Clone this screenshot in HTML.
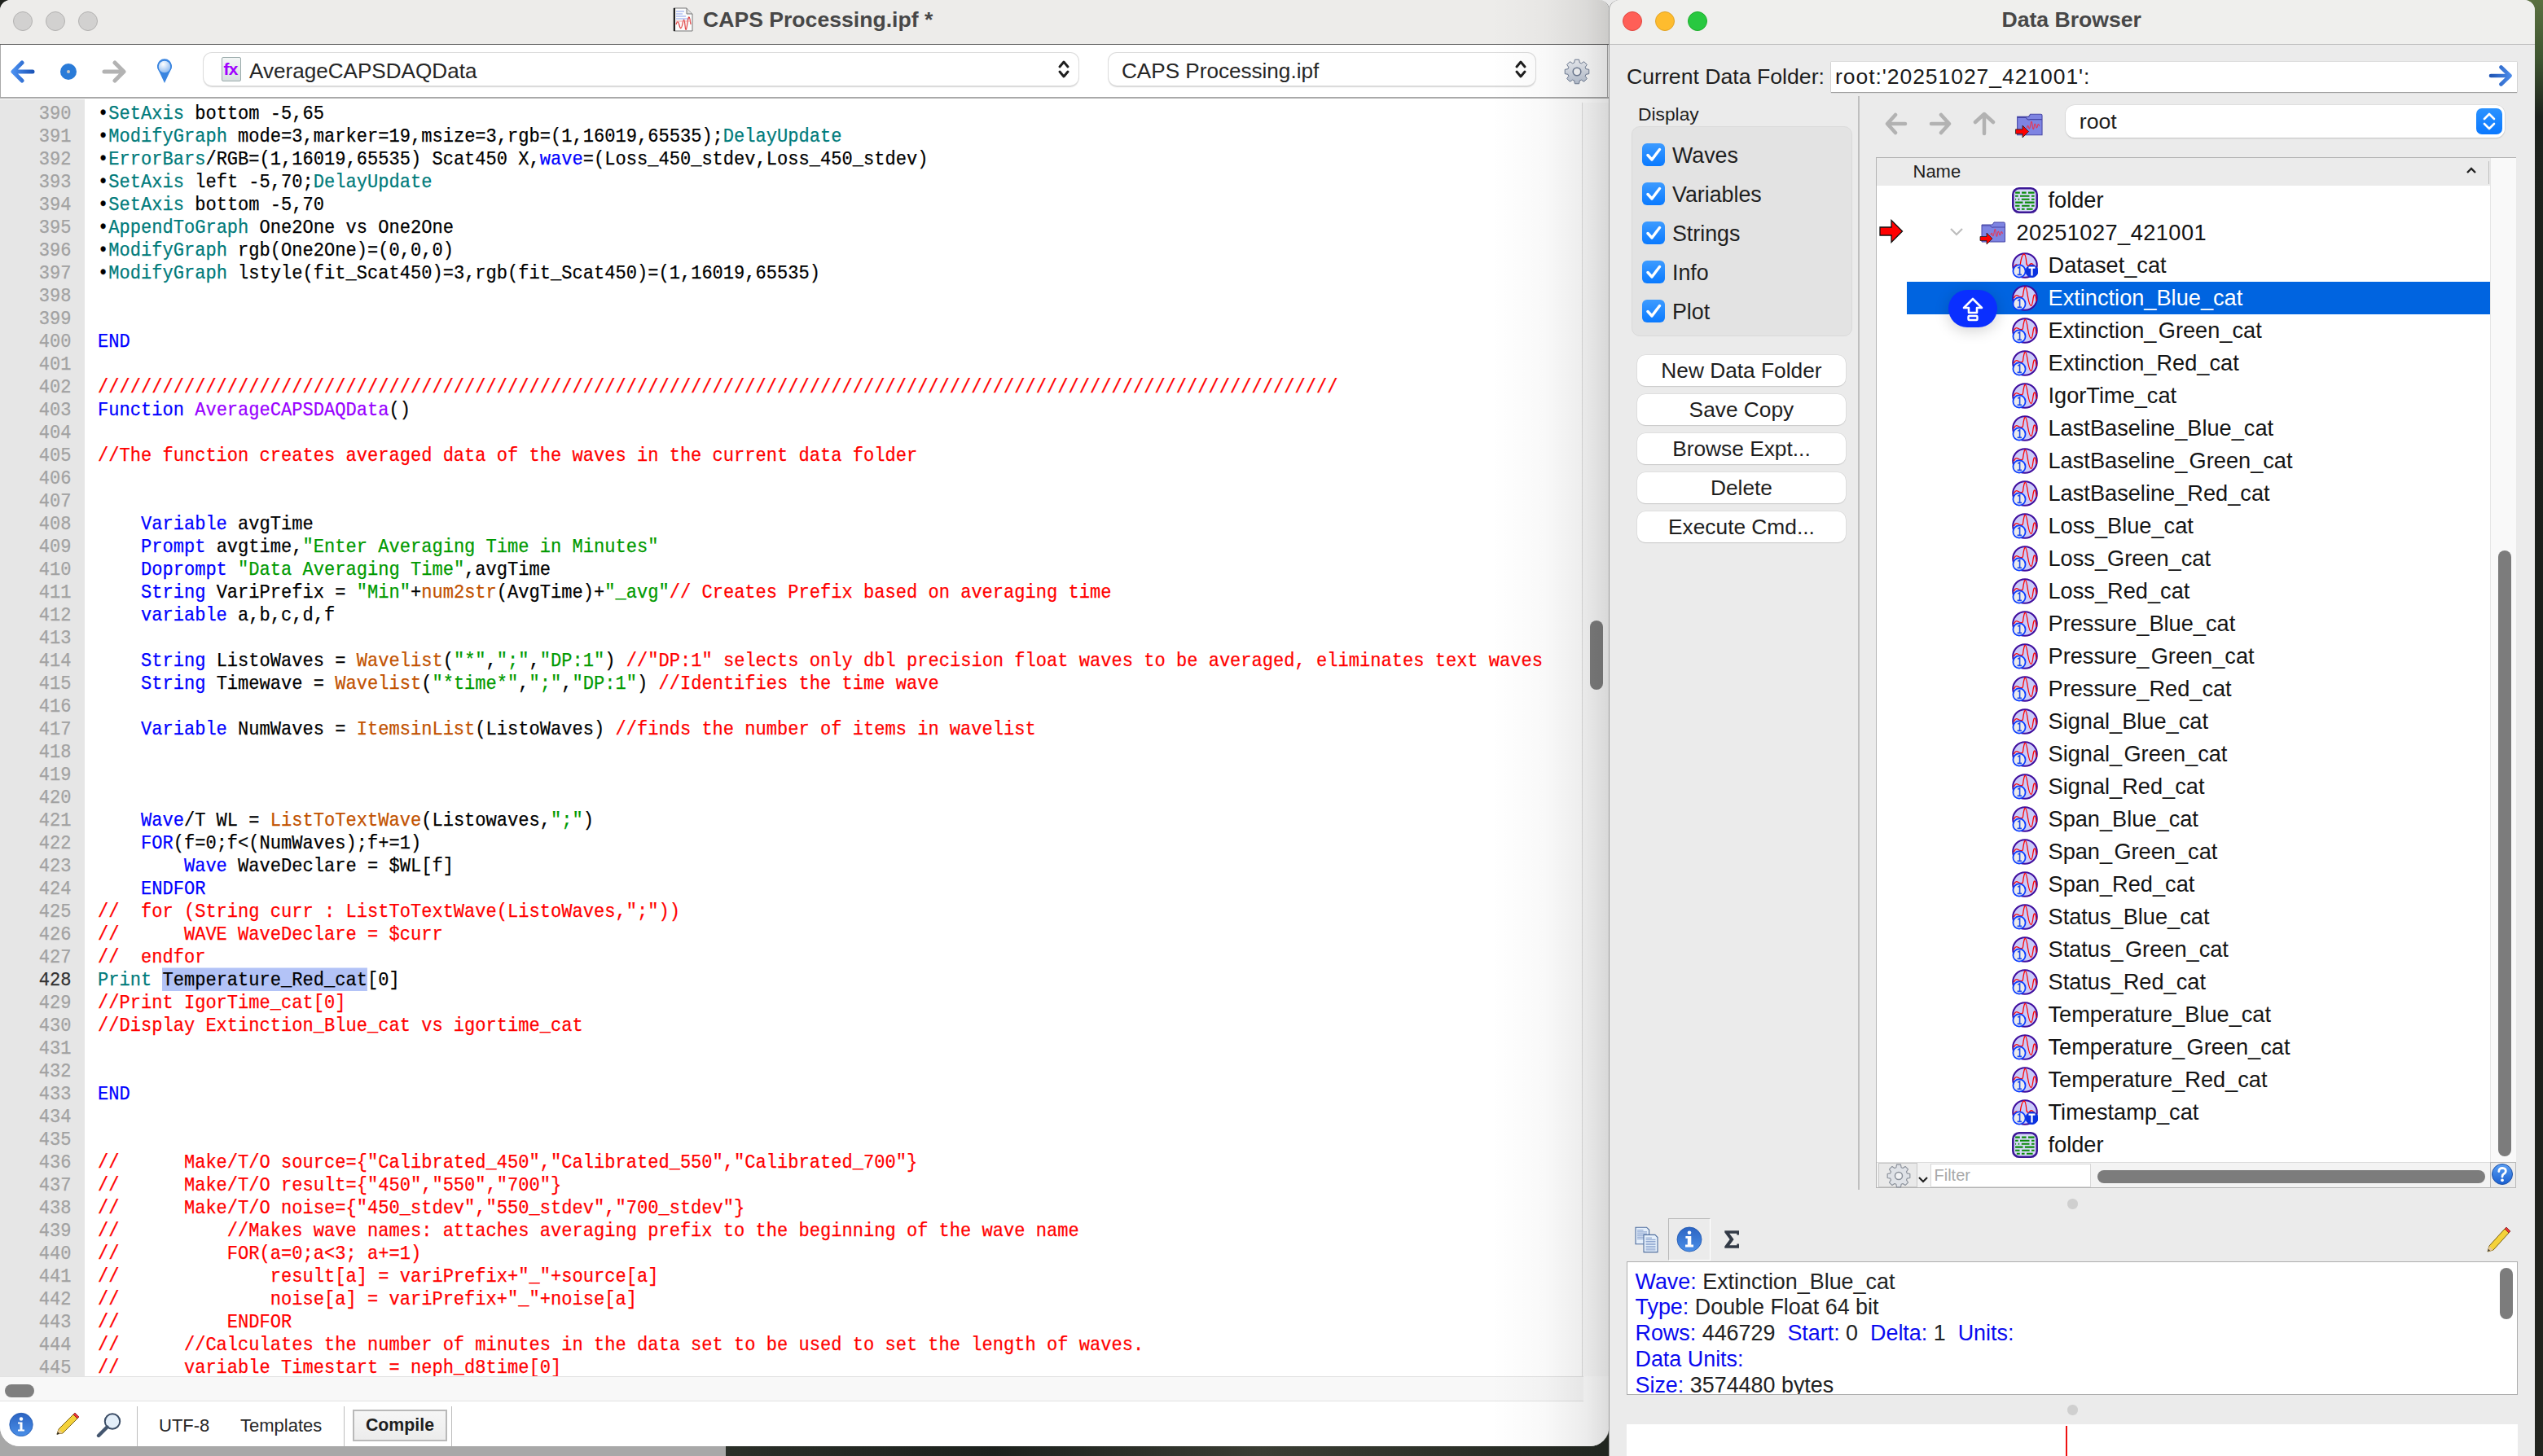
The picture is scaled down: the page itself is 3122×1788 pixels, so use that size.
<!DOCTYPE html>
<html><head><meta charset="utf-8"><title>Igor</title><style>
*{margin:0;padding:0;box-sizing:border-box}
html,body{width:3122px;height:1788px;overflow:hidden}
body{position:relative;background:#1e211d;font-family:"Liberation Sans",sans-serif}
#desk0{position:absolute;left:1950px;top:0;width:50px;height:30px;background:#e9e9e9}
#desk1{position:absolute;left:0;top:1700px;width:891px;height:88px;background:#a8a8a8}
#desk2{position:absolute;left:891px;top:1740px;width:1100px;height:48px;background:linear-gradient(90deg,#2a2f28,#1c211d 30%,#3a3d33 60%,#20251f)}
#desk3{position:absolute;left:3100px;top:0;width:22px;height:1788px;background:linear-gradient(180deg,#5a7040,#3e5530 4%,#1d221d 8%,#1a1d1a 60%,#23251f)}
.ic{position:absolute}
#lw{position:absolute;left:0;top:0;width:1976px;height:1776px;background:#fff;border-radius:13px 13px 24px 24px;overflow:hidden;border-right:1.5px solid #8c8c8c}
#lw-title{position:absolute;left:0;top:0;width:100%;height:55px;background:#edecea;border-bottom:1.5px solid #5e5e5e}
.tl{position:absolute;top:14px;width:24px;height:24px;border-radius:50%;background:#d2d1d0;border:1px solid #b3b2b1}
#ipf-icon{position:absolute;left:826px;top:9px;width:25px;height:30px}
#ipf-icon svg{display:block}
#lw-ttext{position:absolute;left:863px;top:6px;font-weight:bold;font-size:26.6px;color:#474747;line-height:36px;white-space:nowrap}
#lw-tb{position:absolute;left:0;top:0;width:100%;height:121px}
.popup{position:absolute;background:#fff;border-radius:10px;box-shadow:0 0 0 1px #dcdcdc,0 1.5px 1.5px rgba(0,0,0,.18)}
.ptext{position:absolute;top:2px;line-height:41px;font-size:26.1px;color:#262626;white-space:nowrap}
.updown{position:absolute;top:8px}
#fx-icon{position:absolute;left:22px;top:5px;width:24px;height:30px;background:linear-gradient(180deg,#f3f6f6,#d8e0e0);border:1px solid #9aa;border-radius:2px}
#fx-icon span{position:absolute;left:1.5px;top:4px;font-size:21px;font-weight:bold;color:#a000ff;line-height:20px;letter-spacing:-0.8px}
#lw-tb:after{content:"";position:absolute;left:0;top:119px;width:100%;height:1.5px;background:#a9a9a9}
#gutter{position:absolute;left:0;top:122px;width:104px;height:1568px;background:#e6e6e6}
#code{position:absolute;left:0;top:0;width:1942px;height:1690px;font-family:"Liberation Mono",monospace;font-size:24px;-webkit-text-stroke:0.25px currentColor}
.ln{position:absolute;left:0;width:87.5px;text-align:right;color:#a2a2a2;line-height:28px;height:28px;white-space:pre;transform:scaleX(0.9192);transform-origin:87.5px 0}
.ln.cur{color:#333}
.cl{position:absolute;left:120px;line-height:28px;height:28px;white-space:pre;color:#000;transform:scaleX(0.9192);transform-origin:0 0}
.teal{color:#007b7b}.blue{color:#0000ff}.purp{color:#9900ff}.orng{color:#c25200}.grn{color:#009a00}.red{color:#ff0000}
.hl{background:#b3c3f7;box-shadow:0 -1.5px 0 #b3c3f7}
#vscroll{position:absolute;left:1942px;top:126px;width:34px;height:1564px;background:#fbfbfb;border-left:1px solid #dedede}
#vthumb{position:absolute;left:9px;top:636px;width:16px;height:85px;border-radius:8px;background:#7f7f7f}
#hscroll{position:absolute;left:0;top:1690px;width:1944px;height:31px;background:#f8f8f8;border-top:1px solid #e2e2e2;border-bottom:1px solid #e2e2e2}
#hthumb{position:absolute;left:6px;top:9px;width:36px;height:16px;border-radius:8px;background:#7f7f7f}
#status{position:absolute;left:0;top:1721px;width:100%;height:55px;background:#fff}
#status .ic{top:13px!important}
.sep{position:absolute;top:6px;width:1px;height:49px;background:#bdbdbd}
.stxt{position:absolute;top:2px;line-height:55px;font-size:22px;color:#262626}
#compile{position:absolute;left:433px;top:10px;width:116px;height:39px;border:2px solid #b9b9b9;background:linear-gradient(#f6f6f6,#ececec);font-weight:bold;font-size:21.3px;line-height:35px;text-align:center;color:#1e1e1e}
#lw-shadow{position:absolute;left:1830px;top:0;width:146px;height:1776px;background:linear-gradient(90deg,rgba(0,0,0,0),rgba(0,0,0,.025) 45%,rgba(0,0,0,.075) 80%,rgba(0,0,0,.14));pointer-events:none}

#rw{position:absolute;left:1976px;top:0;width:1136px;height:1800px;background:#ebebeb;border-radius:13px 13px 0 0;overflow:hidden;box-shadow:-1px 0 0 #9c9c9c}
#rw-title{position:absolute;left:0;top:0;width:100%;height:55px;background:#efefed;border-bottom:1px solid #bdbdbd}
.tlc{position:absolute;top:14px;width:24px;height:24px;border-radius:50%;border:1px solid}
#rw-ttext{position:absolute;left:481.5px;top:6px;font-weight:bold;font-size:26.6px;color:#474747;line-height:36px;white-space:nowrap}
.rlab{position:absolute;font-size:26.66px;color:#1e1e1e;line-height:30px;white-space:nowrap}
#cdf{position:absolute;left:271.5px;top:76px;width:842.5px;height:36.5px;background:#fff;box-shadow:0 1px 1px rgba(0,0,0,.28),0 0 0 0.5px #d0d0d0}
#cdf-t{position:absolute;left:5.5px;top:3px;font-size:26.5px;line-height:30px;color:#1a1a1a;letter-spacing:0.95px;white-space:nowrap}
#rdiv{position:absolute;left:305px;top:118px;width:1.5px;height:1343px;background:#bfbfbf}
#dgroup{position:absolute;left:26.5px;top:154.5px;width:271px;height:258.5px;background:#e3e3e3;border:1px solid #dadada;border-radius:10px}
.cb{position:absolute;left:40px;width:28px;height:28px;border-radius:6px;background:linear-gradient(180deg,#3d9bff,#0a7aff)}
.cb svg{position:absolute;left:0;top:0}
.cbl{position:absolute;left:77px;font-size:26.8px;line-height:28px;color:#1e1e1e;white-space:nowrap;margin-top:1px}
.btn{position:absolute;left:33.6px;width:256.7px;height:38px;background:#fff;border-radius:10px;box-shadow:0 0 0 0.5px #d4d4d4,0 1px 1px rgba(0,0,0,.18);font-size:26.3px;line-height:38px;text-align:center;color:#1e1e1e;white-space:nowrap}
#rootpop{position:absolute;left:559.8px;top:128.7px;width:539.7px;height:40.3px;background:#fff;border-radius:11px;box-shadow:0 0 0 0.5px #d4d4d4,0 1px 1.5px rgba(0,0,0,.22)}
#rootpop-t{position:absolute;left:17px;top:4px;font-size:26.7px;line-height:32px;color:#1e1e1e}
#rootstep{position:absolute;left:504px;top:4.3px;width:32px;height:32px;border-radius:7px;background:linear-gradient(180deg,#2a92ff,#0a78ff)}
#list{position:absolute;left:326.5px;top:192.5px;width:786.5px;height:1266px;border:1px solid #b3b3b3;background:#fff}
#lhead{position:absolute;left:0;top:0;width:753px;height:34px;background:#ebebeb}
#lname{position:absolute;left:45px;top:1px;font-size:22px;line-height:32px;color:#1e1e1e}
#lbody{position:absolute;left:0;top:34px;width:753px;height:1199px;overflow:hidden;background:#fff}
.row{position:absolute;left:0;width:753px;height:40px}
.row.sel{}
.row.sel:before{content:"";position:absolute;left:37px;top:0;width:716px;height:40px;background:#0064e0}
.row.sel .rt{color:#fff}
.rt{position:absolute;top:0;font-size:27.2px;line-height:40px;color:#141414;white-space:nowrap}
.chev{position:absolute}
#pill{position:absolute;left:88.5px;top:128px;width:60px;height:46px;border-radius:23px;background:#0a2fff;box-shadow:0 4px 18px rgba(0,0,0,.18)}
#pill svg{position:absolute;left:0;top:0}
#lvs{position:absolute;left:753px;top:0;width:32.5px;height:1233px;background:#f9f9f9;border-left:1px solid #e6e6e6}
#lvthumb{position:absolute;left:9px;top:482.5px;width:16px;height:744px;border-radius:8px;background:#7c7c7c}
#lfoot{position:absolute;left:0;top:1233px;width:785px;height:31px;background:#f3f3f3;border-top:1px solid #dcdcdc}
#lgear{position:absolute;left:2px;top:0;width:48px;height:30px;background:#e9e9e9;border:1px solid #c8c8c8}
#lgear svg{position:absolute;left:9px;top:0}
#lfilter{position:absolute;left:66px;top:1px;width:197px;height:29px;background:#fff;border:1px solid #d8d8d8;font-size:20px;line-height:27px;color:#a8a8a8;padding-left:4px}
#lhthumb{position:absolute;left:271px;top:9px;width:476px;height:16.5px;border-radius:8px;background:#7c7c7c}
#lhelp{position:absolute;left:753px;top:-1px;width:32.5px;height:32px;background:#ececec;border:1.5px solid #b9b9b9}
#lhelp svg{position:absolute;left:0.5px;top:0.5px;width:28px;height:28px}
.sdot{position:absolute;width:12.5px;height:12.5px;border-radius:50%;background:#cfcfcf}
#infotab{position:absolute;left:72px;top:1496px;width:52px;height:52px;background:#ebebeb;border-top:1.8px solid #b9b9b9;border-left:1.8px solid #b9b9b9;border-right:1.8px solid #fff;border-bottom:1.8px solid #fff}
#infotab svg{position:absolute;left:7.5px;top:7.5px}
#sigma{position:absolute;left:140px;top:1503px;font-size:33px;line-height:36px;color:#2e2e2e;font-family:"Liberation Serif",serif}
#infobox{position:absolute;left:20.5px;top:1548.5px;width:1094.5px;height:164.5px;background:#fff;border:1px solid #adadad;overflow:hidden}
.il{position:absolute;left:10px;font-size:26.9px;line-height:31px;color:#222;white-space:nowrap}
.il b{font-weight:normal;color:#0a0aef}
#ivs{position:absolute;left:1071px;top:7.5px;width:16px;height:63px;border-radius:8px;background:#7c7c7c}
#plotbox{position:absolute;left:20.5px;top:1748.5px;width:1094.5px;height:60px;background:#fff}
</style></head>
<body>
<div id="desk0"></div><div id="desk1"></div><div id="desk2"></div><div id="desk3"></div>

<div id="lw">
  <div id="lw-title">
    <div class="tl" style="left:16px"></div><div class="tl" style="left:56px"></div><div class="tl" style="left:96px"></div>
    <div id="ipf-icon"><svg width="25" height="30" viewBox="0 0 25 30"><path d="M1 1 H17 L24 8 V29 H1 Z" fill="#fbfbfb" stroke="#777" stroke-width="1"/><path d="M17 1 V8 H24" fill="#ddd" stroke="#777" stroke-width="1"/><rect x="1" y="1" width="2" height="28" fill="#222"/><path d="M4 5 H14 M4 8 H12 M4 11 H16 M4 14 H20" stroke="#8aa0ee" stroke-width="1"/><path d="M4 21 Q6 14 8 22 T12 20 T15 22 T18 19 T22 21" stroke="#e04040" fill="none" stroke-width="1.2"/><path d="M4 17 H22" stroke="#e88" stroke-width="0.8"/></svg></div>
    <div id="lw-ttext">CAPS Processing.ipf *</div>
  </div>
  <div id="lw-tb"><div style="position:absolute;left:0;top:55px;width:1974px;height:65px;border-left:1.5px solid #a9a9a9;border-right:1.5px solid #a9a9a9"></div>
    <svg class="ic" style="left:13px;top:74px" width="30" height="28" viewBox="0 0 30 28"><defs><linearGradient id="gb" x1="0" x2="1"><stop offset="0" stop-color="#4a8ff0"/><stop offset="1" stop-color="#1c55b8"/></linearGradient></defs><path d="M14 3 L3 14 L14 25 M4 14 H27" stroke="url(#gb)" stroke-width="5" stroke-linecap="round" stroke-linejoin="round" fill="none"/></svg>
    <div style="position:absolute;left:74px;top:78px;width:20px;height:20px;border-radius:50%;background:#2a7bd8"></div>
    <div style="position:absolute;left:82px;top:86px;width:4px;height:4px;border-radius:50%;background:#c8c8c8"></div>
    <svg class="ic" style="left:125px;top:74px" width="30" height="28" viewBox="0 0 30 28"><path d="M16 3 L27 14 L16 25 M26 14 H3" stroke="#b3b3b3" stroke-width="5" stroke-linecap="round" stroke-linejoin="round" fill="none"/></svg>
    <svg class="ic" style="left:192px;top:72px" width="20" height="31" viewBox="0 0 20 31"><defs><radialGradient id="pin" cx="0.4" cy="0.3" r="0.7"><stop offset="0" stop-color="#fff"/><stop offset="1" stop-color="#8ab8f0"/></radialGradient></defs><path d="M10 30 L3 15 A9 9 0 1 1 17 15 Z" fill="#3a85e0"/><circle cx="10" cy="10" r="8" fill="url(#pin)" stroke="#3a85e0" stroke-width="1.5"/></svg>
    <div class="popup" style="left:250px;top:64.5px;width:1074px;height:40.5px">
      <div id="fx-icon"><span>fx</span></div>
      <div class="ptext" style="left:56px">AverageCAPSDAQData</div>
      <svg class="updown" style="right:11px" width="14" height="24" viewBox="0 0 14 24"><path d="M2 9 L7 3 L12 9 M2 15 L7 21 L12 15" stroke="#1e1e1e" stroke-width="2.9" fill="none" stroke-linecap="round" stroke-linejoin="round"/></svg>
    </div>
    <div class="popup" style="left:1361px;top:64.5px;width:524px;height:40.5px">
      <div class="ptext" style="left:16px">CAPS Processing.ipf</div>
      <svg class="updown" style="right:11px" width="14" height="24" viewBox="0 0 14 24"><path d="M2 9 L7 3 L12 9 M2 15 L7 21 L12 15" stroke="#1e1e1e" stroke-width="2.9" fill="none" stroke-linecap="round" stroke-linejoin="round"/></svg>
    </div>
    <svg class="ic" style="left:1920px;top:72px" width="32" height="32" viewBox="0 0 32 32"><defs><linearGradient id="gear" x1="0" y1="0" x2="0" y2="1"><stop offset="0" stop-color="#f2f4f8"/><stop offset="1" stop-color="#b9c3d3"/></linearGradient></defs><path d="M30.77 13.36 L30.77 18.64 L27.00 19.34 L26.14 21.42 L28.31 24.58 L24.58 28.31 L21.42 26.14 L19.34 27.00 L18.64 30.77 L13.36 30.77 L12.66 27.00 L10.58 26.14 L7.42 28.31 L3.69 24.58 L5.86 21.42 L5.00 19.34 L1.23 18.64 L1.23 13.36 L5.00 12.66 L5.86 10.58 L3.69 7.42 L7.42 3.69 L10.58 5.86 L12.66 5.00 L13.36 1.23 L18.64 1.23 L19.34 5.00 L21.42 5.86 L24.58 3.69 L28.31 7.42 L26.14 10.58 L27.00 12.66 Z" fill="url(#gear)" stroke="#6f7c94" stroke-width="1" stroke-linejoin="round"/><circle cx="16" cy="16" r="4.8" fill="#f7f8fa" stroke="#6f7c94" stroke-width="1.6"/></svg>
  </div>
  <div id="gutter"></div>
  <div id="code">
<div class="ln" style="top:126px">390</div>
<div class="ln" style="top:154px">391</div>
<div class="ln" style="top:182px">392</div>
<div class="ln" style="top:210px">393</div>
<div class="ln" style="top:238px">394</div>
<div class="ln" style="top:266px">395</div>
<div class="ln" style="top:294px">396</div>
<div class="ln" style="top:322px">397</div>
<div class="ln" style="top:350px">398</div>
<div class="ln" style="top:378px">399</div>
<div class="ln" style="top:406px">400</div>
<div class="ln" style="top:434px">401</div>
<div class="ln" style="top:462px">402</div>
<div class="ln" style="top:490px">403</div>
<div class="ln" style="top:518px">404</div>
<div class="ln" style="top:546px">405</div>
<div class="ln" style="top:574px">406</div>
<div class="ln" style="top:602px">407</div>
<div class="ln" style="top:630px">408</div>
<div class="ln" style="top:658px">409</div>
<div class="ln" style="top:686px">410</div>
<div class="ln" style="top:714px">411</div>
<div class="ln" style="top:742px">412</div>
<div class="ln" style="top:770px">413</div>
<div class="ln" style="top:798px">414</div>
<div class="ln" style="top:826px">415</div>
<div class="ln" style="top:854px">416</div>
<div class="ln" style="top:882px">417</div>
<div class="ln" style="top:910px">418</div>
<div class="ln" style="top:938px">419</div>
<div class="ln" style="top:966px">420</div>
<div class="ln" style="top:994px">421</div>
<div class="ln" style="top:1022px">422</div>
<div class="ln" style="top:1050px">423</div>
<div class="ln" style="top:1078px">424</div>
<div class="ln" style="top:1106px">425</div>
<div class="ln" style="top:1134px">426</div>
<div class="ln" style="top:1162px">427</div>
<div class="ln cur" style="top:1190px">428</div>
<div class="ln" style="top:1218px">429</div>
<div class="ln" style="top:1246px">430</div>
<div class="ln" style="top:1274px">431</div>
<div class="ln" style="top:1302px">432</div>
<div class="ln" style="top:1330px">433</div>
<div class="ln" style="top:1358px">434</div>
<div class="ln" style="top:1386px">435</div>
<div class="ln" style="top:1414px">436</div>
<div class="ln" style="top:1442px">437</div>
<div class="ln" style="top:1470px">438</div>
<div class="ln" style="top:1498px">439</div>
<div class="ln" style="top:1526px">440</div>
<div class="ln" style="top:1554px">441</div>
<div class="ln" style="top:1582px">442</div>
<div class="ln" style="top:1610px">443</div>
<div class="ln" style="top:1638px">444</div>
<div class="ln" style="top:1666px">445</div>
<div class="cl" style="top:126px">•<span class="teal">SetAxis</span> bottom -5,65</div>
<div class="cl" style="top:154px">•<span class="teal">ModifyGraph</span> mode=3,marker=19,msize=3,rgb=(1,16019,65535);<span class="teal">DelayUpdate</span></div>
<div class="cl" style="top:182px">•<span class="teal">ErrorBars</span>/RGB=(1,16019,65535) Scat450 X,<span class="blue">wave</span>=(Loss_450_stdev,Loss_450_stdev)</div>
<div class="cl" style="top:210px">•<span class="teal">SetAxis</span> left -5,70;<span class="teal">DelayUpdate</span></div>
<div class="cl" style="top:238px">•<span class="teal">SetAxis</span> bottom -5,70</div>
<div class="cl" style="top:266px">•<span class="teal">AppendToGraph</span> One2One vs One2One</div>
<div class="cl" style="top:294px">•<span class="teal">ModifyGraph</span> rgb(One2One)=(0,0,0)</div>
<div class="cl" style="top:322px">•<span class="teal">ModifyGraph</span> lstyle(fit_Scat450)=3,rgb(fit_Scat450)=(1,16019,65535)</div>
<div class="cl" style="top:406px"><span class="blue">END</span></div>
<div class="cl" style="top:462px"><span class="red">///////////////////////////////////////////////////////////////////////////////////////////////////////////////////</span></div>
<div class="cl" style="top:490px"><span class="blue">Function</span> <span class="purp">AverageCAPSDAQData</span>()</div>
<div class="cl" style="top:546px"><span class="red">//The function creates averaged data of the waves in the current data folder</span></div>
<div class="cl" style="top:630px">    <span class="blue">Variable</span> avgTime</div>
<div class="cl" style="top:658px">    <span class="blue">Prompt</span> avgtime,<span class="grn">&quot;Enter Averaging Time in Minutes&quot;</span></div>
<div class="cl" style="top:686px">    <span class="blue">Doprompt</span> <span class="grn">&quot;Data Averaging Time&quot;</span>,avgTime</div>
<div class="cl" style="top:714px">    <span class="blue">String</span> VariPrefix = <span class="grn">&quot;Min&quot;</span>+<span class="orng">num2str</span>(AvgTime)+<span class="grn">&quot;_avg&quot;</span><span class="red">// Creates Prefix based on averaging time</span></div>
<div class="cl" style="top:742px">    <span class="blue">variable</span> a,b,c,d,f</div>
<div class="cl" style="top:798px">    <span class="blue">String</span> ListoWaves = <span class="orng">Wavelist</span>(<span class="grn">&quot;*&quot;</span>,<span class="grn">&quot;;&quot;</span>,<span class="grn">&quot;DP:1&quot;</span>) <span class="red">//&quot;DP:1&quot; selects only dbl precision float waves to be averaged, eliminates text waves</span></div>
<div class="cl" style="top:826px">    <span class="blue">String</span> Timewave = <span class="orng">Wavelist</span>(<span class="grn">&quot;*time*&quot;</span>,<span class="grn">&quot;;&quot;</span>,<span class="grn">&quot;DP:1&quot;</span>) <span class="red">//Identifies the time wave</span></div>
<div class="cl" style="top:882px">    <span class="blue">Variable</span> NumWaves = <span class="orng">ItemsinList</span>(ListoWaves) <span class="red">//finds the number of items in wavelist</span></div>
<div class="cl" style="top:994px">    <span class="blue">Wave</span>/T WL = <span class="orng">ListToTextWave</span>(Listowaves,<span class="grn">&quot;;&quot;</span>)</div>
<div class="cl" style="top:1022px">    <span class="blue">FOR</span>(f=0;f&lt;(NumWaves);f+=1)</div>
<div class="cl" style="top:1050px">        <span class="blue">Wave</span> WaveDeclare = $WL[f]</div>
<div class="cl" style="top:1078px">    <span class="blue">ENDFOR</span></div>
<div class="cl" style="top:1106px"><span class="red">//  for (String curr : ListToTextWave(ListoWaves,&quot;;&quot;))</span></div>
<div class="cl" style="top:1134px"><span class="red">//      WAVE WaveDeclare = $curr</span></div>
<div class="cl" style="top:1162px"><span class="red">//  endfor</span></div>
<div class="cl" style="top:1190px"><span class="teal">Print</span> <span class="hl">Temperature_Red_cat</span>[0]</div>
<div class="cl" style="top:1218px"><span class="red">//Print IgorTime_cat[0]</span></div>
<div class="cl" style="top:1246px"><span class="red">//Display Extinction_Blue_cat vs igortime_cat</span></div>
<div class="cl" style="top:1330px"><span class="blue">END</span></div>
<div class="cl" style="top:1414px"><span class="red">//      Make/T/O source={&quot;Calibrated_450&quot;,&quot;Calibrated_550&quot;,&quot;Calibrated_700&quot;}</span></div>
<div class="cl" style="top:1442px"><span class="red">//      Make/T/O result={&quot;450&quot;,&quot;550&quot;,&quot;700&quot;}</span></div>
<div class="cl" style="top:1470px"><span class="red">//      Make/T/O noise={&quot;450_stdev&quot;,&quot;550_stdev&quot;,&quot;700_stdev&quot;}</span></div>
<div class="cl" style="top:1498px"><span class="red">//          //Makes wave names: attaches averaging prefix to the beginning of the wave name</span></div>
<div class="cl" style="top:1526px"><span class="red">//          FOR(a=0;a&lt;3; a+=1)</span></div>
<div class="cl" style="top:1554px"><span class="red">//              result[a] = variPrefix+&quot;_&quot;+source[a]</span></div>
<div class="cl" style="top:1582px"><span class="red">//              noise[a] = variPrefix+&quot;_&quot;+noise[a]</span></div>
<div class="cl" style="top:1610px"><span class="red">//          ENDFOR</span></div>
<div class="cl" style="top:1638px"><span class="red">//      //Calculates the number of minutes in the data set to be used to set the length of waves.</span></div>
<div class="cl" style="top:1666px"><span class="red">//      variable Timestart = neph_d8time[0]</span></div>
  </div>
  <div id="vscroll"><div id="vthumb"></div></div>
  <div id="hscroll"><div id="hthumb"></div></div>
  <div id="status">
    <svg class="ic" style="left:11px;top:1734px" width="30" height="30" viewBox="0 0 30 30"><defs><linearGradient id="ig" x1="0" y1="0" x2="0" y2="1"><stop offset="0" stop-color="#2c64c2"/><stop offset="1" stop-color="#4a8fe8"/></linearGradient></defs><circle cx="15" cy="15.5" r="14.2" fill="url(#ig)" stroke="#1d55b0" stroke-width="0.8"/><circle cx="15" cy="8.5" r="2.2" fill="#fff"/><path d="M11 12.5 H16.5 V21.5 H19 V23.5 H11 V21.5 H13.5 V14.5 H11 Z" fill="#fff"/></svg>
    <svg class="ic" style="left:66px;top:1735px" width="32" height="30" viewBox="0 0 32 30"><path d="M4 27 L6 21 L24 3 L29 8 L11 26 Z" fill="#f4d23a" stroke="#7a6010" stroke-width="1"/><path d="M24 3 L26 1 L31 6 L29 8 Z" fill="#e33" stroke="#822" stroke-width="0.8"/><path d="M4 27 L6 21 L11 26 Z" fill="#e8c890"/><path d="M3.5 28 L5 24.5 L7 26.5 Z" fill="#222"/></svg>
    <svg class="ic" style="left:118px;top:1734px" width="32" height="32" viewBox="0 0 32 32"><circle cx="20" cy="11.5" r="9.2" fill="#e3eef9" stroke="#3b4d66" stroke-width="2"/><path d="M13.5 18.5 L3 29" stroke="#44566f" stroke-width="4.4" stroke-linecap="round"/></svg>
    <div class="sep" style="left:168px"></div>
    <div class="stxt" style="left:195px">UTF-8</div>
    <div class="stxt" style="left:295px">Templates</div>
    <div class="sep" style="left:422px"></div>
    <div id="compile">Compile</div>
    <div class="sep" style="left:554px"></div>
  </div>
  <div id="lw-shadow"></div>
</div>
<svg width="0" height="0" style="position:absolute">
<defs>
<symbol id="sw" viewBox="0 0 32 32">
 <circle cx="16" cy="16" r="14.8" fill="#cbcbf9" stroke="#3e0c9e" stroke-width="2"/>
 <path d="M2.5 16 Q4.5 11.5 7 13 Q9 14.5 12.5 15 L13.5 13 Q15 1.5 16.5 2.5 Q18 3 19.5 14 Q21.5 25.5 23.5 25.5 Q25 25.5 26 17 Q27 11 28 12 Q29.5 13 30 20" fill="none" stroke="#f00" stroke-width="1.3"/>
 <circle cx="9" cy="23" r="7.6" fill="#ebebeb" stroke="#0b3cff" stroke-width="1.8"/>
 <path d="M7.2 19.2 L9.6 17.8 V27.2 M6.6 27.4 H12" fill="none" stroke="#1a49f0" stroke-width="1.6"/>
</symbol>
<symbol id="swt" viewBox="0 0 32 32">
 <circle cx="16" cy="16" r="14.8" fill="#cbcbf9" stroke="#3e0c9e" stroke-width="2"/>
 <path d="M2.5 18 Q5 13 7 16 L10 16 Q12 2 15 2 Q17 2 18 14 Q19 17 21 16 Q24 12 26 15 Q28 17 30 18" fill="none" stroke="#f00" stroke-width="1.3"/>
 <circle cx="9" cy="23" r="7.6" fill="#ebebeb" stroke="#0b3cff" stroke-width="1.8"/>
 <path d="M7.2 19.2 L9.6 17.8 V27.2 M6.6 27.4 H12" fill="none" stroke="#1a49f0" stroke-width="1.6"/>
 <circle cx="24.5" cy="23" r="7.6" fill="#0a32e0" stroke="#0a32e0" stroke-width="1"/>
 <path d="M20.5 18.7 H28.5 M24.5 18.7 V28.5" fill="none" stroke="#fff" stroke-width="2.2"/>
</symbol>
<symbol id="snb" viewBox="0 0 32 32">
 <rect x="1.3" y="1.3" width="29.4" height="29.4" rx="7.5" fill="#d6d9f7" stroke="#3c1896" stroke-width="2.6"/>
 <path d="M4.1 6.6 H9.8 M12.1 6.6 H17.6 M20 6.6 H27.6 M4.1 10.7 H7.7 M10 10.7 H21.5 M24 10.7 H27.6 M4.1 14.8 H5.1 M7.7 14.8 H9.2 M11.8 14.8 H21.5 M24 14.8 H27.6 M4.1 18.6 H13.5 M15.9 18.6 H27.6 M4.1 22.8 H9.5 M12.1 22.8 H21.7 M24 22.8 H27.6 M5.9 26.8 H9.8 M11.9 26.8 H15.6 M18 26.8 H25.6" fill="none" stroke="#0a8a0a" stroke-width="2.1"/>
</symbol>
<symbol id="sdf" viewBox="0 0 34 30">
 <path d="M4 6 H17 L19 3 H31 Q32.5 3 32.5 4.5 V27 H4 Z" fill="#7e84e2" stroke="#4646a6" stroke-width="1"/>
 <path d="M4 7 H14 Q16 10.5 19 9 H32.5" fill="none" stroke="#4646a6" stroke-width="1"/>
 <path d="M15 19 Q16 14 17 18 Q18 23 19.5 14 Q20.5 8 21.5 17 Q22.5 24 23.5 16 Q24.5 12 25.5 17 Q26.5 21 27.5 15.5 Q28.5 13 29.5 17" fill="none" stroke="#e23a5a" stroke-width="1.1"/>
 <path d="M2 20.5 H10 V16 L17 23 L10 30 V25.5 H2 Z" fill="#f00" stroke="#222" stroke-width="0.8"/>
</symbol>
</defs></svg>
<div id="rw">
  <div id="rw-title">
    <div class="tlc" style="left:16px;background:#ff5f57;border-color:#e2463f"></div>
    <div class="tlc" style="left:56px;background:#febc2e;border-color:#e1a325"></div>
    <div class="tlc" style="left:96px;background:#28c840;border-color:#1dad2b"></div>
    <div id="rw-ttext">Data Browser</div>
  </div>
  <div class="rlab" style="left:21px;top:79px">Current Data Folder:</div>
  <div id="cdf"><div id="cdf-t">root:'20251027_421001':</div>
    <svg style="position:absolute;right:5px;top:3.5px" width="30" height="28" viewBox="0 0 30 28"><defs><linearGradient id="ga" x1="0" x2="1"><stop offset="0" stop-color="#1f55b5"/><stop offset="1" stop-color="#4a8ae8"/></linearGradient></defs><path d="M3 13 H26 M15.5 2.5 L26.5 13 L15.5 23.5" fill="none" stroke="url(#ga)" stroke-width="4.6" stroke-linecap="round" stroke-linejoin="round"/></svg>
  </div>
  <div id="rdiv"></div>
  <div class="rlab" style="left:35px;top:124.5px;font-size:22.8px">Display</div>
  <div id="dgroup"></div>
  <div class="cb" style="top:176px"><svg width="28" height="28" viewBox="0 0 28 28"><path d="M7 14.5 L12 20 L21.5 7.5" fill="none" stroke="#fff" stroke-width="3.4" stroke-linecap="round" stroke-linejoin="round"/></svg></div><div class="cbl" style="top:176px">Waves</div><div class="cb" style="top:224px"><svg width="28" height="28" viewBox="0 0 28 28"><path d="M7 14.5 L12 20 L21.5 7.5" fill="none" stroke="#fff" stroke-width="3.4" stroke-linecap="round" stroke-linejoin="round"/></svg></div><div class="cbl" style="top:224px">Variables</div><div class="cb" style="top:272px"><svg width="28" height="28" viewBox="0 0 28 28"><path d="M7 14.5 L12 20 L21.5 7.5" fill="none" stroke="#fff" stroke-width="3.4" stroke-linecap="round" stroke-linejoin="round"/></svg></div><div class="cbl" style="top:272px">Strings</div><div class="cb" style="top:320px"><svg width="28" height="28" viewBox="0 0 28 28"><path d="M7 14.5 L12 20 L21.5 7.5" fill="none" stroke="#fff" stroke-width="3.4" stroke-linecap="round" stroke-linejoin="round"/></svg></div><div class="cbl" style="top:320px">Info</div><div class="cb" style="top:368px"><svg width="28" height="28" viewBox="0 0 28 28"><path d="M7 14.5 L12 20 L21.5 7.5" fill="none" stroke="#fff" stroke-width="3.4" stroke-linecap="round" stroke-linejoin="round"/></svg></div><div class="cbl" style="top:368px">Plot</div><div class="btn" style="top:436px">New Data Folder</div><div class="btn" style="top:484px">Save Copy</div><div class="btn" style="top:532px">Browse Expt...</div><div class="btn" style="top:580px">Delete</div><div class="btn" style="top:628px">Execute Cmd...</div>
  <svg style="position:absolute;left:338px;top:138px" width="28" height="28" viewBox="0 0 28 28"><path d="M13 3 L3 14 L13 25 M4 14 H25" fill="none" stroke="#b2b2b2" stroke-width="4.5" stroke-linecap="round" stroke-linejoin="round"/></svg>
  <svg style="position:absolute;left:392px;top:138px" width="28" height="28" viewBox="0 0 28 28"><path d="M15 3 L25 14 L15 25 M24 14 H3" fill="none" stroke="#b2b2b2" stroke-width="4.5" stroke-linecap="round" stroke-linejoin="round"/></svg>
  <svg style="position:absolute;left:446px;top:137px" width="28" height="30" viewBox="0 0 28 30"><path d="M3 13 L14 3 L25 13 M14 4 V27" fill="none" stroke="#b2b2b2" stroke-width="4.5" stroke-linecap="round" stroke-linejoin="round"/></svg>
  <svg style="position:absolute;left:496px;top:137px" width="37" height="32" viewBox="0 0 34 30"><use href="#sdf"/></svg>
  <div id="rootpop"><div id="rootpop-t">root</div>
    <div id="rootstep"><svg width="32" height="32" viewBox="0 0 32 32"><path d="M10 13 L16 7 L22 13 M10 19 L16 25 L22 19" fill="none" stroke="#fff" stroke-width="2.6" stroke-linecap="round" stroke-linejoin="round"/></svg></div>
  </div>
  <div id="list">
    <div id="lhead"><div id="lname">Name</div>
      <svg style="position:absolute;left:722.5px;top:10.5px" width="16" height="10" viewBox="0 0 16 10"><path d="M3 8 L8 3 L13 8" fill="none" stroke="#222" stroke-width="2.4"/></svg>
      <div style="position:absolute;left:751px;top:4px;width:1.5px;height:28px;background:#bdbdbd"></div>
    </div>
    <div id="lbody">
<div class="row" style="top:-1.5px"><svg style="position:absolute;left:166px;top:4px" width="32" height="32"><use href="#snb"/></svg><div class="rt" style="left:211px">folder</div></div>
<div class="row" style="top:38.5px"><svg style="position:absolute;left:3.5px;top:2.5px" width="30" height="30" viewBox="0 0 30 30"><path d="M1 10 H15 V1.5 L28.5 15 L15 28.5 V20 H1 Z" fill="#f00" stroke="#111" stroke-width="1.3" stroke-linejoin="miter"/></svg><svg class="chev" style="left:89px;top:13px" width="18" height="12" viewBox="0 0 18 12"><path d="M2 2 L9 9 L16 2" fill="none" stroke="#bdbdbd" stroke-width="2.2"/></svg><svg style="position:absolute;left:125px;top:4px" width="34" height="30"><use href="#sdf"/></svg><div class="rt" style="left:172px;letter-spacing:0.45px">20251027_421001</div></div>
<div class="row" style="top:78.5px"><svg style="position:absolute;left:166px;top:4px" width="32" height="32"><use href="#swt"/></svg><div class="rt" style="left:211px">Dataset_cat</div></div>
<div class="row sel" style="top:118.5px"><svg style="position:absolute;left:166px;top:4px" width="32" height="32"><use href="#sw"/></svg><div class="rt" style="left:211px">Extinction_Blue_cat</div></div>
<div class="row" style="top:158.5px"><svg style="position:absolute;left:166px;top:4px" width="32" height="32"><use href="#sw"/></svg><div class="rt" style="left:211px">Extinction_&#8202;Green_cat</div></div>
<div class="row" style="top:198.5px"><svg style="position:absolute;left:166px;top:4px" width="32" height="32"><use href="#sw"/></svg><div class="rt" style="left:211px">Extinction_Red_cat</div></div>
<div class="row" style="top:238.5px"><svg style="position:absolute;left:166px;top:4px" width="32" height="32"><use href="#sw"/></svg><div class="rt" style="left:211px">IgorTime_cat</div></div>
<div class="row" style="top:278.5px"><svg style="position:absolute;left:166px;top:4px" width="32" height="32"><use href="#sw"/></svg><div class="rt" style="left:211px">LastBaseline_Blue_cat</div></div>
<div class="row" style="top:318.5px"><svg style="position:absolute;left:166px;top:4px" width="32" height="32"><use href="#sw"/></svg><div class="rt" style="left:211px">LastBaseline_&#8202;Green_cat</div></div>
<div class="row" style="top:358.5px"><svg style="position:absolute;left:166px;top:4px" width="32" height="32"><use href="#sw"/></svg><div class="rt" style="left:211px">LastBaseline_Red_cat</div></div>
<div class="row" style="top:398.5px"><svg style="position:absolute;left:166px;top:4px" width="32" height="32"><use href="#sw"/></svg><div class="rt" style="left:211px">Loss_Blue_cat</div></div>
<div class="row" style="top:438.5px"><svg style="position:absolute;left:166px;top:4px" width="32" height="32"><use href="#sw"/></svg><div class="rt" style="left:211px">Loss_Green_cat</div></div>
<div class="row" style="top:478.5px"><svg style="position:absolute;left:166px;top:4px" width="32" height="32"><use href="#sw"/></svg><div class="rt" style="left:211px">Loss_Red_cat</div></div>
<div class="row" style="top:518.5px"><svg style="position:absolute;left:166px;top:4px" width="32" height="32"><use href="#sw"/></svg><div class="rt" style="left:211px">Pressure_Blue_cat</div></div>
<div class="row" style="top:558.5px"><svg style="position:absolute;left:166px;top:4px" width="32" height="32"><use href="#sw"/></svg><div class="rt" style="left:211px">Pressure_&#8202;Green_cat</div></div>
<div class="row" style="top:598.5px"><svg style="position:absolute;left:166px;top:4px" width="32" height="32"><use href="#sw"/></svg><div class="rt" style="left:211px">Pressure_Red_cat</div></div>
<div class="row" style="top:638.5px"><svg style="position:absolute;left:166px;top:4px" width="32" height="32"><use href="#sw"/></svg><div class="rt" style="left:211px">Signal_Blue_cat</div></div>
<div class="row" style="top:678.5px"><svg style="position:absolute;left:166px;top:4px" width="32" height="32"><use href="#sw"/></svg><div class="rt" style="left:211px">Signal_&#8202;Green_cat</div></div>
<div class="row" style="top:718.5px"><svg style="position:absolute;left:166px;top:4px" width="32" height="32"><use href="#sw"/></svg><div class="rt" style="left:211px">Signal_Red_cat</div></div>
<div class="row" style="top:758.5px"><svg style="position:absolute;left:166px;top:4px" width="32" height="32"><use href="#sw"/></svg><div class="rt" style="left:211px">Span_Blue_cat</div></div>
<div class="row" style="top:798.5px"><svg style="position:absolute;left:166px;top:4px" width="32" height="32"><use href="#sw"/></svg><div class="rt" style="left:211px">Span_&#8202;Green_cat</div></div>
<div class="row" style="top:838.5px"><svg style="position:absolute;left:166px;top:4px" width="32" height="32"><use href="#sw"/></svg><div class="rt" style="left:211px">Span_Red_cat</div></div>
<div class="row" style="top:878.5px"><svg style="position:absolute;left:166px;top:4px" width="32" height="32"><use href="#sw"/></svg><div class="rt" style="left:211px">Status_Blue_cat</div></div>
<div class="row" style="top:918.5px"><svg style="position:absolute;left:166px;top:4px" width="32" height="32"><use href="#sw"/></svg><div class="rt" style="left:211px">Status_&#8202;Green_cat</div></div>
<div class="row" style="top:958.5px"><svg style="position:absolute;left:166px;top:4px" width="32" height="32"><use href="#sw"/></svg><div class="rt" style="left:211px">Status_Red_cat</div></div>
<div class="row" style="top:998.5px"><svg style="position:absolute;left:166px;top:4px" width="32" height="32"><use href="#sw"/></svg><div class="rt" style="left:211px">Temperature_Blue_cat</div></div>
<div class="row" style="top:1038.5px"><svg style="position:absolute;left:166px;top:4px" width="32" height="32"><use href="#sw"/></svg><div class="rt" style="left:211px">Temperature_&#8202;Green_cat</div></div>
<div class="row" style="top:1078.5px"><svg style="position:absolute;left:166px;top:4px" width="32" height="32"><use href="#sw"/></svg><div class="rt" style="left:211px">Temperature_Red_cat</div></div>
<div class="row" style="top:1118.5px"><svg style="position:absolute;left:166px;top:4px" width="32" height="32"><use href="#swt"/></svg><div class="rt" style="left:211px">Timestamp_cat</div></div>
<div class="row" style="top:1158.5px"><svg style="position:absolute;left:166px;top:4px" width="32" height="32"><use href="#snb"/></svg><div class="rt" style="left:211px">folder</div></div>
      <div id="pill"><svg width="60" height="46" viewBox="0 0 60 46"><path d="M30 11 L19 22 H25 V28 H35 V22 H41 Z" fill="none" stroke="#fff" stroke-width="2.6" stroke-linejoin="round"/><rect x="24.5" y="32" width="11" height="5" rx="1" fill="none" stroke="#fff" stroke-width="2.4"/></svg></div>
    </div>
    <div id="lvs"><div id="lvthumb"></div></div>
    <div id="lfoot">
      <div id="lgear"><svg width="30" height="30" viewBox="0 0 32 32"><path d="M30.77 13.36 L30.77 18.64 L27.00 19.34 L26.14 21.42 L28.31 24.58 L24.58 28.31 L21.42 26.14 L19.34 27.00 L18.64 30.77 L13.36 30.77 L12.66 27.00 L10.58 26.14 L7.42 28.31 L3.69 24.58 L5.86 21.42 L5.00 19.34 L1.23 18.64 L1.23 13.36 L5.00 12.66 L5.86 10.58 L3.69 7.42 L7.42 3.69 L10.58 5.86 L12.66 5.00 L13.36 1.23 L18.64 1.23 L19.34 5.00 L21.42 5.86 L24.58 3.69 L28.31 7.42 L26.14 10.58 L27.00 12.66 Z" fill="#dfe2e7" stroke="#8a909a" stroke-width="1.2" stroke-linejoin="round"/><circle cx="16" cy="16" r="4.8" fill="#f2f3f5" stroke="#8a909a" stroke-width="1.6"/></svg></div>
      <svg style="position:absolute;left:50px;top:16px" width="14" height="10" viewBox="0 0 14 10"><path d="M2 2 L7 7 L12 2" fill="none" stroke="#222" stroke-width="2.2"/></svg>
      <div id="lfilter">Filter</div>
      <div id="lhthumb"></div>
      <div id="lhelp"><svg width="28" height="28" viewBox="0 0 28 28"><defs><linearGradient id="gh" x1="0" y1="0" x2="0" y2="1"><stop offset="0" stop-color="#5aa0f5"/><stop offset="1" stop-color="#1a5fd0"/></linearGradient></defs><circle cx="14" cy="14" r="12.5" fill="url(#gh)" stroke="#1a4fa8" stroke-width="1"/><path d="M9.8 10.5 Q10 6.3 14.2 6.3 Q18.4 6.5 18.3 10 Q18.2 12.4 15.6 13.7 Q14 14.5 14 17" fill="none" stroke="#fff" stroke-width="2.8" stroke-linecap="round"/><circle cx="14" cy="21.3" r="1.9" fill="#fff"/></svg></div>
    </div>
  </div>
  <div class="sdot" style="left:562px;top:1472px"></div>
  <svg style="position:absolute;left:30px;top:1506px" width="32" height="34" viewBox="0 0 32 34"><path d="M2 1.2 H15.5 L18.6 4.3 V21.7 H2 Z" fill="#e4eefa" stroke="#4f6e9e" stroke-width="1.1"/><path d="M4 4.8 H11.5 M4 6.9 H16 M4 9 H16 M4 11.1 H16 M4 13.2 H16 M4 15.3 H16" stroke="#5f7fb8" stroke-width="0.75"/><path d="M12 10.4 H25.9 L29 13.5 V31.6 H12 Z" fill="#e6f0fb" stroke="#4f6e9e" stroke-width="1.1"/><path d="M14.5 14.2 H22 M14.5 16.3 H26.5 M14.5 18.4 H26.5 M14.5 20.5 H26.5 M14.5 22.6 H26.5 M14.5 24.7 H26.5 M14.5 26.8 H26.5 M14.5 28.9 H26.5" stroke="#5f7fb8" stroke-width="0.75"/></svg>
  <div id="infotab"><svg width="34" height="34" viewBox="0 0 34 34"><defs><linearGradient id="ig2" x1="0" y1="0" x2="0" y2="1"><stop offset="0" stop-color="#2c64c2"/><stop offset="1" stop-color="#4a8fe8"/></linearGradient></defs><circle cx="17" cy="17" r="15" fill="url(#ig2)" stroke="#1d55b0" stroke-width="0.8"/><circle cx="17" cy="8.8" r="2.3" fill="#fff"/><path d="M12.4 13 H19.3 V23.6 H22 V26.4 H12 V23.6 H14.8 V15.8 H12.4 Z" fill="#fff"/></svg></div>
  <svg style="position:absolute;left:140px;top:1510px" width="21" height="24" viewBox="0 0 21 24"><path d="M1.3 1.2 H19 V6.6 H16.3 V4.8 H7.2 L12.6 12 L7.2 19.2 H16.3 V17.4 H19 V22.8 H1.3 V20.6 L7.6 12 L1.3 3.4 Z" fill="#323a46"/></svg>
  <svg style="position:absolute;left:1074px;top:1504px" width="34" height="36" viewBox="0 0 34 36"><path d="M4 33 L6 26 L25 5 L30 10 L11 31 Z" fill="#f4d23a" stroke="#7a6010" stroke-width="1"/><path d="M25 5 L27 3 L32 8 L30 10 Z" fill="#e33" stroke="#822" stroke-width="0.8"/><path d="M4 33 L6 26 L11 31 Z" fill="#e8c890"/><path d="M4 33 L5 30 L7 31.5 Z" fill="#333"/></svg>
  <div id="infobox">
    <div class="il" style="top:9px"><b>Wave:</b> Extinction_Blue_cat</div>
    <div class="il" style="top:40.9px"><b>Type:</b> Double Float 64 bit</div>
    <div class="il" style="top:72.8px"><b>Rows:</b> 446729&nbsp; <b>Start:</b> 0&nbsp; <b>Delta:</b> 1&nbsp; <b>Units:</b></div>
    <div class="il" style="top:104.7px"><b>Data Units:</b></div>
    <div class="il" style="top:136.6px"><b>Size:</b> 3574480 bytes</div>
    <div id="ivs"></div>
  </div>
  <div class="sdot" style="left:562px;top:1725px"></div>
  <div id="plotbox"><div style="position:absolute;left:539px;top:2px;width:2px;height:60px;background:#e11"></div></div>
</div>

</body></html>
